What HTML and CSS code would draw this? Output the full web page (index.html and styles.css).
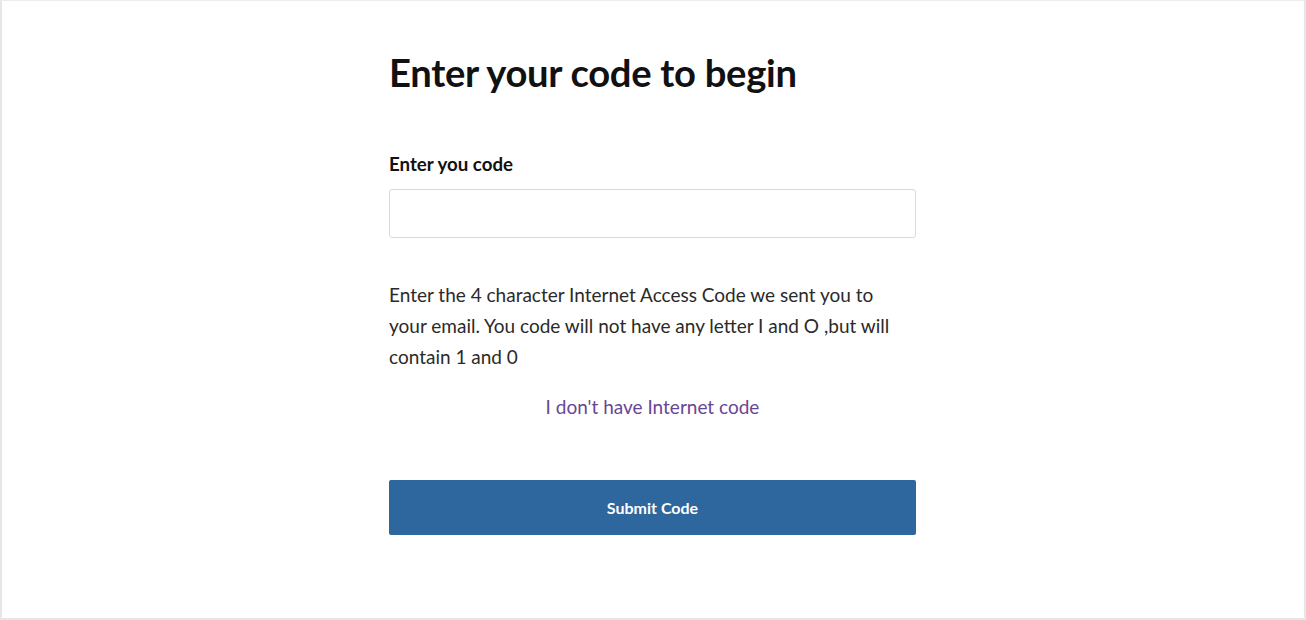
FILE: index.html
```html
<!DOCTYPE html>
<html lang="en">
<head>
<meta charset="utf-8">
<title>Enter your code</title>
<link rel="stylesheet" href="styles.css">
</head>
<body>
<div class="frame">
  <main class="panel">
    <h1 class="title">Enter your code to begin</h1>
    <form class="form" onsubmit="return false">
      <label class="label" for="code">Enter you code</label>
      <input class="input" id="code" type="text">
      <p class="help">Enter the 4 character Internet Access Code we sent you to your email. You code will not have any letter I and O ,but will contain 1 and 0</p>
      <a class="link" href="#">I don't have Internet code</a>
      <button class="submit" type="submit">Submit Code</button>
    </form>
  </main>
</div>
</body>
</html>
```
FILE: styles.css
```css
html, body {
  margin: 0;
  padding: 0;
  background: #ffffff;
}
body {
  font-family: "Lato", "Open Sans", sans-serif;
  color: #222;
}
.frame {
  box-sizing: border-box;
  height: 620px;
  border-top: 1px solid #ececec;
  border-left: 2px solid #e6e6e6;
  border-right: 2px solid #e6e6e6;
  border-bottom: 2px solid #e6e6e6;
  display: flex;
  justify-content: center;
}
.panel {
  width: 527px;
  padding-top: 47px;
  margin-left: -1px;
}
.title {
  margin: 0;
  font-size: 38.2px;
  font-weight: 700;
  line-height: 48px;
  color: #111;
  letter-spacing: -0.3px;
}
.form {
  display: flex;
  flex-direction: column;
  margin-top: 56px;
}
.label {
  font-size: 18.7px;
  font-weight: 700;
  line-height: 24px;
  color: #111;
}
.input {
  box-sizing: border-box;
  margin-top: 13px;
  height: 49px;
  width: 100%;
  border: 1px solid #d6d9dd;
  border-radius: 3px;
  font: inherit;
}
.help {
  margin: 41px 0 0;
  max-width: 512px;
  font-size: 19px;
  line-height: 31px;
  color: #2a2a2a;
}
.link {
  margin-top: 23px;
  align-self: center;
  font-size: 19px;
  line-height: 24px;
  color: #6a4594;
  text-decoration: none;
}
.submit {
  margin-top: 61px;
  height: 55px;
  width: 100%;
  border: 0;
  border-radius: 2px;
  background: #2e679d;
  color: #fff;
  font-family: inherit;
  font-size: 16px;
  font-weight: 700;
}
```
